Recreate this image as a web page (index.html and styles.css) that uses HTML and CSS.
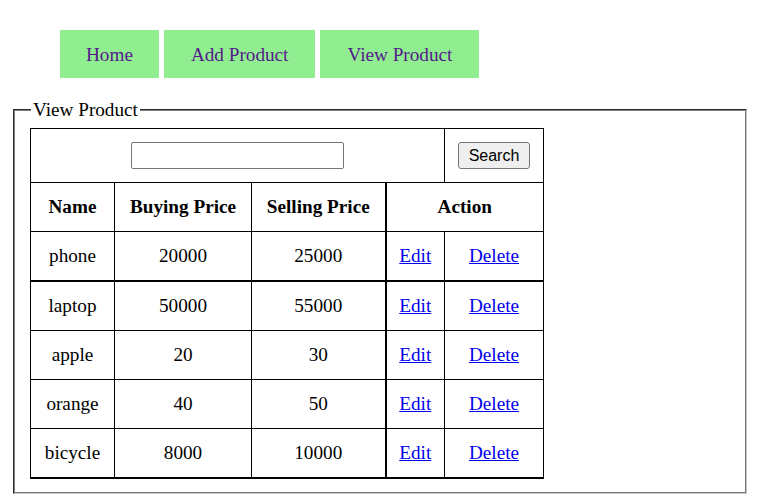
FILE: index.html
```html
<!DOCTYPE html>
<html>
<head>
<meta charset="utf-8">
<title>View Product</title>
<link rel="stylesheet" href="styles.css">
</head>
<body>
<nav class="nav">
  <a class="nav-link" href="#">Home</a>
  <a class="nav-link" href="#">Add Product</a>
  <a class="nav-link" href="#">View Product</a>
</nav>
<fieldset class="panel">
  <legend class="panel-title">View Product</legend>
  <table class="products">
    <colgroup>
      <col class="c-name">
      <col class="c-buy">
      <col class="c-sell">
      <col class="c-edit">
      <col class="c-del">
    </colgroup>
    <tr class="search-row">
      <td colspan="4"><input class="search-input" type="text"></td>
      <td><button class="search-btn">Search</button></td>
    </tr>
    <tr>
      <th>Name</th>
      <th>Buying Price</th>
      <th>Selling Price</th>
      <th colspan="2" class="sep">Action</th>
    </tr>
    <tr class="thick-bottom">
      <td>phone</td><td>20000</td><td>25000</td>
      <td class="sep"><a href="#">Edit</a></td><td><a href="#">Delete</a></td>
    </tr>
    <tr>
      <td>laptop</td><td>50000</td><td>55000</td>
      <td class="sep"><a href="#">Edit</a></td><td><a href="#">Delete</a></td>
    </tr>
    <tr>
      <td>apple</td><td>20</td><td>30</td>
      <td class="sep"><a href="#">Edit</a></td><td><a href="#">Delete</a></td>
    </tr>
    <tr>
      <td>orange</td><td>40</td><td>50</td>
      <td class="sep"><a href="#">Edit</a></td><td><a href="#">Delete</a></td>
    </tr>
    <tr class="thick-bottom">
      <td>bicycle</td><td>8000</td><td>10000</td>
      <td class="sep"><a href="#">Edit</a></td><td><a href="#">Delete</a></td>
    </tr>
  </table>
</fieldset>
</body>
</html>
```

FILE: styles.css
```css
html, body {
  margin: 0;
  padding: 0;
  background: #ffffff;
}

body {
  font-family: "Liberation Serif", "Times New Roman", serif;
  font-size: 19.2px;
  color: #000000;
}

.nav {
  display: flex;
  gap: 5px;
  padding: 30px 0 0 60px;
}

.nav-link {
  box-sizing: border-box;
  display: flex;
  align-items: center;
  height: 48px;
  padding: 2px 26px 0 26px;
  background: #90ee90;
  color: #551a8b;
  text-decoration: none;
}

.nav-link:nth-child(2) {
  padding: 2px 27px 0 27px;
}

.nav-link:nth-child(3) {
  padding: 2px 27px 0 27px;
}

.panel {
  margin: 21px 13px 0 13px;
  padding: 7px 15px 13px 15px;
  border: 2px groove #c0c0c0;
  border-color: #808080 #c8c8c8 #c8c8c8 #808080;
  border-style: groove;
}

.panel-title {
  padding: 0 2px;
  margin-left: 1px;
  line-height: 22px;
}

.products {
  border-collapse: collapse;
  table-layout: fixed;
  width: 513px;
}

.c-name { width: 84px; }
.c-buy { width: 137px; }
.c-sell { width: 134px; }
.c-edit { width: 59px; }
.c-del { width: 99px; }

.products td,
.products th {
  border: 1px solid #000000;
  padding: 13px 0;
  line-height: 22px;
  text-align: center;
  vertical-align: middle;
}

.products th {
  font-weight: bold;
}

.products .sep {
  border-left: 2px solid #000000;
}

.thick-bottom td {
  border-bottom: 2px solid #000000;
}

.products a {
  color: #0000ee;
  text-decoration: underline;
}

.search-row td {
  padding: 13px 0;
  line-height: 0;
}

.search-input {
  box-sizing: border-box;
  width: 213px;
  height: 27px;
  margin: 0;
  border: 1px solid #767676;
  border-radius: 2px;
  background: #ffffff;
  vertical-align: middle;
}

.search-btn {
  box-sizing: border-box;
  width: 72px;
  height: 27px;
  margin: 0;
  padding: 0;
  border: 1px solid #767676;
  border-radius: 3px;
  background: #efefef;
  font-family: "Liberation Sans", Arial, sans-serif;
  font-size: 16px;
  color: #000000;
  vertical-align: middle;
}
```
